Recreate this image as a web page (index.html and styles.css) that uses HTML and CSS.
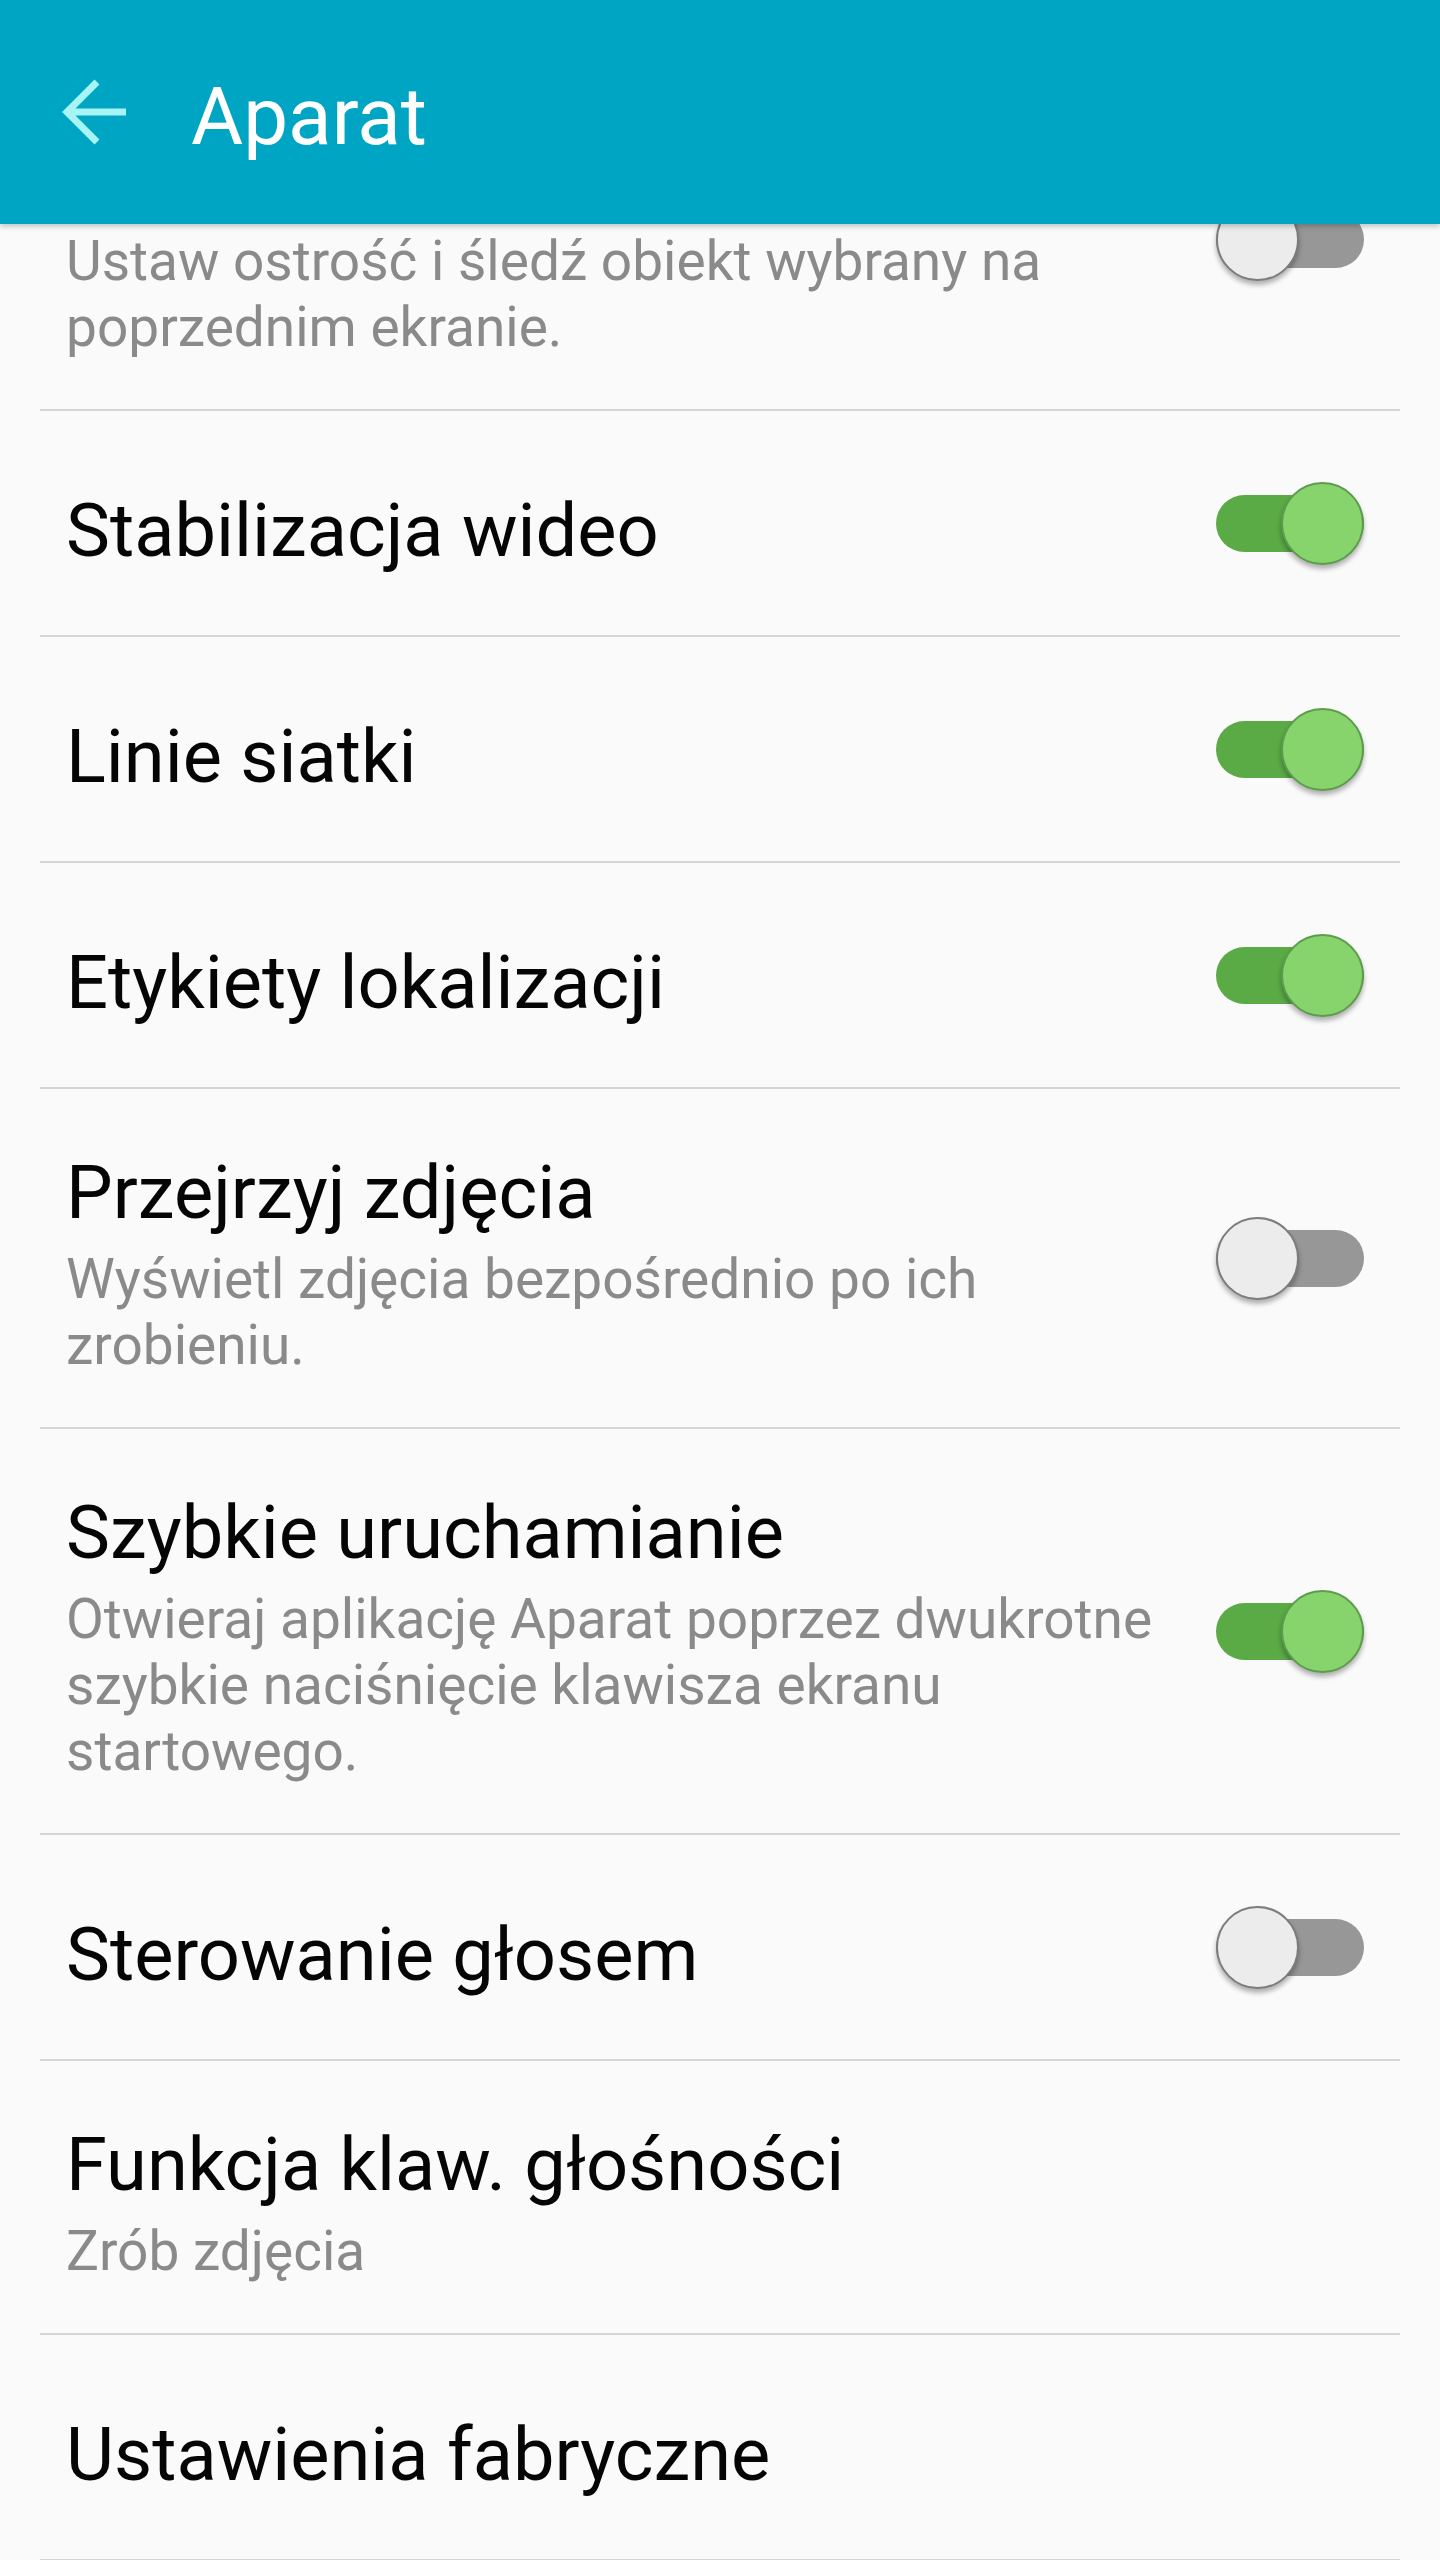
FILE: index.html
```html
<!DOCTYPE html>
<html lang="pl">
  <head>
    <meta charset="UTF-8" />
    <meta name="viewport" content="width=device-width, initial-scale=1.0" />
    <title>Aparat</title>
    <link rel="stylesheet" href="styles.css">
  </head>
  <body>
    <!-- App bar -->
    <header class="appbar">
      <svg class="back" width="68" height="68" viewBox="0 0 68 68">
        <path d="M6 34 H65 M36 4 L6 34 L36 64" fill="none" stroke="#a6f4f4" stroke-width="7" />
      </svg>
      <h1 class="appbar-title">Aparat</h1>
    </header>

    <!-- Settings list (scrolled, first item is cut by the app bar) -->
    <main class="settings">
      <div class="setting">
        <div class="setting-text cut">
          <div class="setting-sub">Ustaw ostrość i śledź obiekt wybrany na poprzednim ekranie.</div>
        </div>
        <span class="switch"><span class="knob"></span></span>
      </div>

      <div class="setting">
        <div class="setting-text">
          <div class="setting-title">Stabilizacja wideo</div>
        </div>
        <span class="switch on"><span class="knob"></span></span>
      </div>

      <div class="setting">
        <div class="setting-text">
          <div class="setting-title">Linie siatki</div>
        </div>
        <span class="switch on"><span class="knob"></span></span>
      </div>

      <div class="setting">
        <div class="setting-text">
          <div class="setting-title">Etykiety lokalizacji</div>
        </div>
        <span class="switch on"><span class="knob"></span></span>
      </div>

      <div class="setting">
        <div class="setting-text">
          <div class="setting-title">Przejrzyj zdjęcia</div>
          <div class="setting-sub">Wyświetl zdjęcia bezpośrednio po ich zrobieniu.</div>
        </div>
        <span class="switch"><span class="knob"></span></span>
      </div>

      <div class="setting">
        <div class="setting-text">
          <div class="setting-title">Szybkie uruchamianie</div>
          <div class="setting-sub">Otwieraj aplikację Aparat poprzez dwukrotne szybkie naciśnięcie klawisza ekranu startowego.</div>
        </div>
        <span class="switch on"><span class="knob"></span></span>
      </div>

      <div class="setting">
        <div class="setting-text">
          <div class="setting-title">Sterowanie głosem</div>
        </div>
        <span class="switch"><span class="knob"></span></span>
      </div>

      <div class="setting">
        <div class="setting-text">
          <div class="setting-title">Funkcja klaw. głośności</div>
          <div class="setting-sub">Zrób zdjęcia</div>
        </div>
      </div>

      <div class="setting">
        <div class="setting-text">
          <div class="setting-title">Ustawienia fabryczne</div>
        </div>
      </div>
    </main>
  </body>
</html>
```

FILE: styles.css
```css
body {
  margin: 0;
  background: #fafafa;
  font-family: Roboto, "Noto Sans", sans-serif;
}

/* App bar, stays over the scrolled list */
.appbar {
  position: fixed;
  top: 0;
  left: 0;
  right: 0;
  height: 224px;
  display: flex;
  align-items: center;
  background: #00a5c4;
  box-shadow: 0 2px 6px rgba(0, 0, 0, 0.25);
  z-index: 10;
}
.back {
  margin-left: 61px;
  flex: none;
}
.appbar-title {
  margin: 10px 0 0 62px;
  font-size: 80px;
  font-weight: 400;
  line-height: 80px;
  color: #fff;
}

/* List */
.settings {
  padding-top: 70px;
}
.setting {
  display: flex;
  align-items: center;
  min-height: 224px;
  margin: 0 40px;
  padding: 0 36px 0 26px;
  border-bottom: 2px solid #d5d5d5;
}
.setting-text {
  flex: 1;
  padding: 64px 0 49px;
  margin-right: 16px;
}
.setting-text.cut {
  padding-top: 158px;
}
.setting-title {
  font-size: 74px;
  line-height: 80px;
  color: #050505;
}
.setting-sub {
  margin-top: 13px;
  font-size: 55px;
  line-height: 66px;
  color: #8a8a8a;
}
.setting-text.cut .setting-sub {
  margin-top: 0;
}

/* Switch */
.switch {
  flex: none;
  display: flex;
  align-items: center;
  width: 148px;
  height: 57px;
  border-radius: 29px;
  background: #979797;
}
.knob {
  flex: none;
  box-sizing: border-box;
  width: 83px;
  height: 83px;
  border-radius: 50%;
  background: #ececec;
  border: 2px solid #7c7c7c;
  box-shadow: 0 4px 5px rgba(0, 0, 0, 0.3);
}
.switch.on {
  justify-content: flex-end;
  background: #5aaa46;
}
.switch.on .knob {
  background: #88d46c;
  border-color: #5c9c4c;
}
```
